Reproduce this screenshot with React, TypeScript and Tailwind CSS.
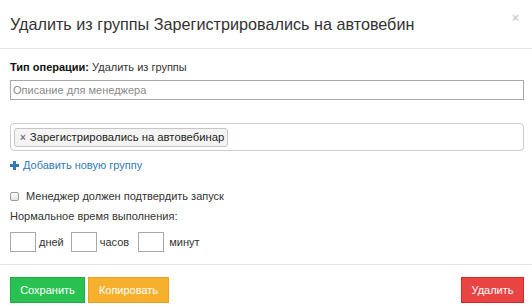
import React from "react";

export default function App() {
  return (
    <div className="w-[532px] h-[308px] bg-white text-[#333] overflow-hidden" style={{ fontFamily: '"Liberation Sans", Arial, sans-serif' }}>
      <div className="h-[49px] border-b border-[#e5e5e5] pl-[10px] pr-[8px] pt-[14px] flex justify-between">
        <div className="text-[16.2px] leading-[20px] text-[#333]">Удалить из группы Зарегистрировались на автовебин</div>
        <div className="text-[12px] leading-[12px] text-[#cfcfcf] mr-[5px] mt-[-2px] font-bold">×</div>
      </div>
      <div className="pl-[10px] pr-[8px] pt-[10px] text-[11px] leading-[17px]">
        <div>
          <span className="font-bold text-[#111]">Тип операции:</span> Удалить из группы
        </div>
        <input
          className="mt-[4px] block w-full h-[20px] border border-[#a9a9a9] px-[2px] text-[11px] outline-none placeholder:text-[#8a8a8a]"
          placeholder="Описание для менеджера"
        />
        <div className="mt-[23px] h-[28px] border border-[#ccc] rounded-[4px] pl-[3px] pt-[4px]">
          <div className="inline-flex items-center h-[19px] border border-[#c6c6c6] rounded-[3px] bg-[#f4f4f4] pl-[5px] pr-[3px]">
            <span className="text-[10px] font-bold text-[#777] mr-[4px]">×</span>
            <span className="text-[11.3px] text-[#222]">Зарегистрировались на автовебинар</span>
          </div>
        </div>
        <div className="mt-[6px] flex items-center text-[#337ab7]">
          <svg width="9" height="9" viewBox="0 0 9 9" className="mr-[4px]">
            <rect x="3" y="0" width="3" height="9" fill="#337ab7" />
            <rect x="0" y="3" width="9" height="3" fill="#337ab7" />
          </svg>
          <span>Добавить новую группу</span>
        </div>
        <div className="mt-[14px] flex items-center">
          <span className="inline-block w-[9px] h-[9px] border border-[#9a9a9a] rounded-[2px] bg-gradient-to-b from-[#fdfdfd] to-[#e4e4e4] mr-[7px]" />
          <span>Менеджер должен подтвердить запуск</span>
        </div>
        <div className="mt-[3px]">Нормальное время выполнения:</div>
        <div className="mt-[7px] flex items-center">
          <input className="w-[26px] h-[20px] border border-[#a9a9a9] outline-none" />
          <span className="ml-[3px]">дней</span>
          <input className="ml-[7px] w-[26px] h-[20px] border border-[#a9a9a9] outline-none" />
          <span className="ml-[3px]">часов</span>
          <input className="ml-[9px] w-[26px] h-[20px] border border-[#a9a9a9] outline-none" />
          <span className="ml-[5px]">минут</span>
        </div>
      </div>
      <div className="mt-[12px] border-t border-[#e5e5e5] pl-[10px] pr-[8px] pt-[12px] flex items-center text-[11px]">
        <button className="w-[75px] h-[26px] bg-[#28c152] border border-[#1fad45] text-white">Сохранить</button>
        <button className="ml-[3px] w-[81px] h-[26px] bg-[#f6b02d] border border-[#eda21f] text-white">Копировать</button>
        <div className="flex-1" />
        <button className="w-[63px] h-[26px] bg-[#e84444] border border-[#d82828] text-white">Удалить</button>
      </div>
    </div>
  );
}
